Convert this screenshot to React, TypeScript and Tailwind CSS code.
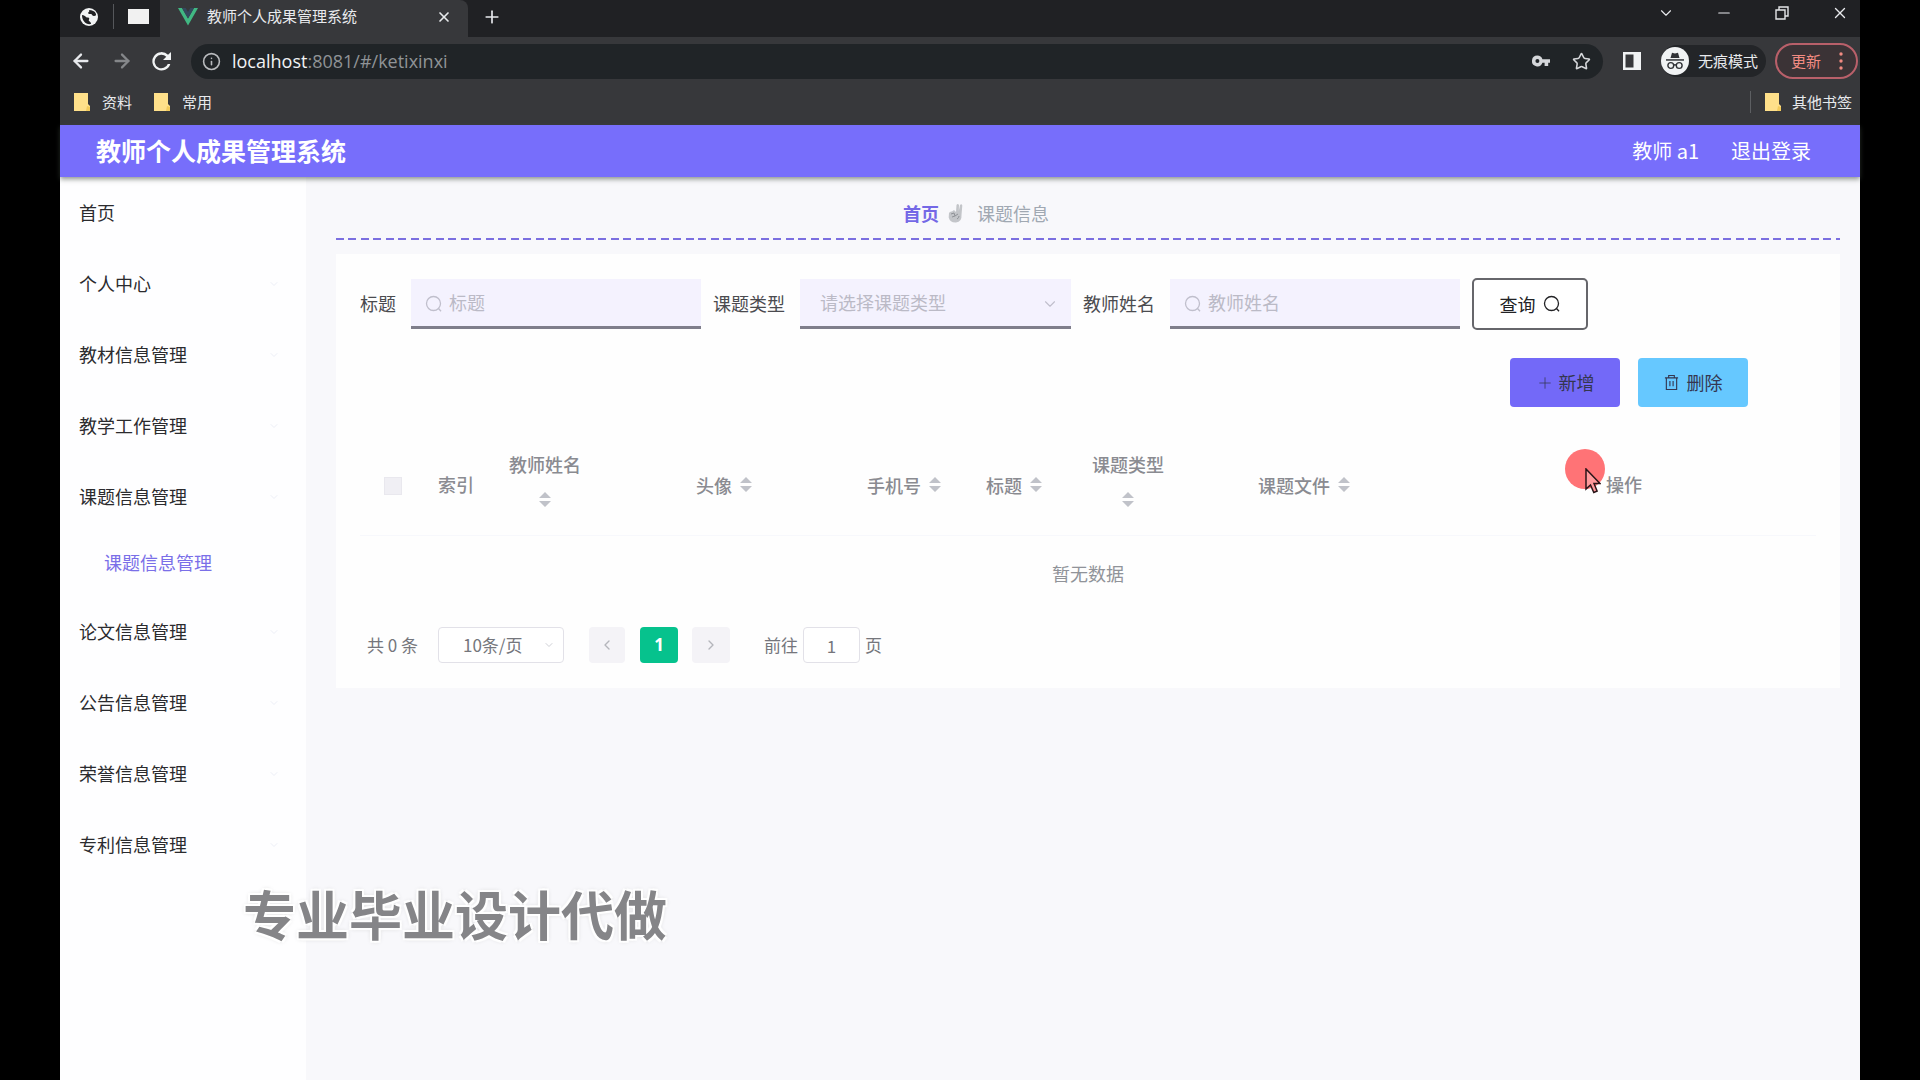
import React from 'react';
import { ChevronDown, ChevronLeft, ChevronRight, Info, Minus, Plus, Star, X, ArrowLeft, ArrowRight } from 'lucide-react';

const menuBefore = ['个人中心', '教材信息管理', '教学工作管理', '课题信息管理'];
const menuAfter = ['论文信息管理', '公告信息管理', '荣誉信息管理', '专利信息管理'];

function GlobeIcon() {
  return (
    <svg viewBox="0 0 20 20" className="size-5" aria-hidden="true">
      <circle cx="10" cy="10" r="9" fill="#f1f3f4" />
      <path d="M3 8c2 0 3 1 4 2s2 0 3 1-1 2 0 3 2 1 2 3c-5 1-9-3-9-9Z" fill="#202124" />
      <path d="M10 3c1 2-1 2-1 3s2 1 3 1 1 2 3 2 2-1 2-2c-1-3-4-4-7-4Z" fill="#202124" />
    </svg>
  );
}

function VueIcon() {
  return (
    <svg viewBox="0 0 20 18" className="h-[18px] w-5" aria-hidden="true">
      <path d="M0 0h4l6 10.500L16 0h4L10 17.500Z" fill="#41b883" />
      <path d="M4 0h3.700L10 4l2.300-4H16L10 10.500Z" fill="#35495e" />
    </svg>
  );
}

function ReloadIcon() {
  return (
    <svg viewBox="0 0 16 16" className="size-[19px]" aria-hidden="true">
      <path d="M13.500 2.400A7.700 7.700 0 1 0 15.400 10h-2.100a5.700 5.700 0 1 1-1.300-6L9.300 6.700H16V0Z" fill="#f1f3f4" />
    </svg>
  );
}

function KeyIcon() {
  return (
    <svg viewBox="0 0 20 12" className="h-3 w-[18px]" aria-hidden="true">
      <path d="M6 0a6 6 0 1 0 5.600 8H14v3.500h4V8h2V4h-8.400A6 6 0 0 0 6 0Zm0 8.200a2.200 2.200 0 1 1 0-4.400 2.200 2.200 0 0 1 0 4.400Z" fill="#d5d7da" fillRule="evenodd" />
    </svg>
  );
}

function IncognitoIcon() {
  return (
    <svg viewBox="0 0 28 28" className="size-7" aria-hidden="true">
      <circle cx="14" cy="14" r="14" fill="#f1f3f4" />
      <path d="M9.500 11 11 5.800l3 .8 3-.8 1.500 5.200Z" fill="#303236" />
      <path d="M5 12.200h18v1.500H5Z" fill="#303236" />
      <g fill="none" stroke="#303236" strokeWidth="1.400">
        <circle cx="9.800" cy="18.500" r="2.900" />
        <circle cx="18.200" cy="18.500" r="2.900" />
        <path d="M12.700 18.200q1.300-.9 2.600 0" />
      </g>
    </svg>
  );
}

function FolderIcon() {
  return (
    <svg viewBox="0 0 16 18" className="h-[18px] w-4" aria-hidden="true">
      <path d="M0 0h14v11l2 2v5H0Z" fill="#ffe08a" />
      <path d="M13 13l3 1v4h-4Z" fill="#f3cb5c" />
    </svg>
  );
}

function PanelIcon() {
  return (
    <svg viewBox="0 0 18 18" className="size-[18px]" aria-hidden="true">
      <path d="M0 0h18v18H0Zm2.500 2.500v13h8v-13Z" fill="#f1f3f4" fillRule="evenodd" />
    </svg>
  );
}

function RestoreIcon() {
  return (
    <svg viewBox="0 0 14 14" className="size-[14px]" fill="none" stroke="#e4e6e8" strokeWidth="1.400" aria-hidden="true">
      <path d="M1 4h9v9H1ZM4 4V1h9v9h-3" />
    </svg>
  );
}

function SearchIcon({ className }: { className: string }) {
  return (
    <svg viewBox="0 0 18 18" className={className} fill="none" stroke="currentColor" strokeWidth="1.300" aria-hidden="true">
      <circle cx="8.500" cy="8.500" r="7" />
      <path d="m13.500 13.500 2.500 2.700" />
    </svg>
  );
}

function TrashIcon() {
  return (
    <svg viewBox="0 0 16 18" className="h-[17px] w-[15px]" fill="none" stroke="currentColor" strokeWidth="1.200" aria-hidden="true">
      <path d="M1 4h14M5 4V1.500h6V4M2.500 4v12.500h11V4M6.300 7.500v5.500M9.700 7.500v5.500" />
    </svg>
  );
}

function HandIcon() {
  return (
    <svg viewBox="0 0 16 20" className="h-5 w-4" aria-hidden="true">
      <path d="M8 9 8.500 2q1.200-2 2.500 0L10.800 8l1.200-6q1.500-1.500 2.300.5L13.500 12q.5 7-5.500 7.500-6 .3-7.300-5L1 10q1-2 3-1.500l2-1.500Z" fill="#c3c5c9" />
      <path d="M3 11l3-1 1 3-3 1m3-1 3-2m-1 5q2-1 2-3" fill="none" stroke="#8f9297" strokeWidth="1" />
    </svg>
  );
}

function SortButton({ label }: { label: string }) {
  return (
    <button type="button" aria-label={'按' + label + '排序'} className="flex h-7 w-4 items-center justify-center">
      <svg viewBox="0 0 12 15" className="h-[15px] w-3" aria-hidden="true">
        <path d="M6 0l6 6H0ZM0 9h12l-6 6Z" fill="#c0c2c9" />
      </svg>
    </button>
  );
}

function SortHeader({ label }: { label: string }) {
  return (
    <th scope="col" className="font-medium">
      <div className="flex items-center justify-center gap-1.5">
        <span className="leading-8">{label}</span>
        <SortButton label={label} />
      </div>
    </th>
  );
}

function StackedSortHeader({ label }: { label: string }) {
  return (
    <th scope="col" className="pb-2 font-medium">
      <div className="flex flex-col items-center gap-1.5">
        <span className="leading-8">{label}</span>
        <SortButton label={label} />
      </div>
    </th>
  );
}

function SearchField({ id, label }: { id: string; label: string }) {
  return (
    <div className="flex items-center gap-[15px]">
      <label htmlFor={id} className="pb-0.5">{label}</label>
      <div className="relative w-[290px]">
        <SearchIcon className="absolute top-4 left-[14px] size-[18px] text-[#c0bfcc]" />
        <input
          id={id}
          type="text"
          placeholder={label}
          className="h-[50px] w-full border-b-3 border-[#7f7e8b] bg-[#f4f2fe] pr-3 pb-0.5 pl-[38px] outline-none placeholder:text-[#bbbac6]"
        />
      </div>
    </div>
  );
}

function BrowserChrome() {
  return (
    <div className="bg-[#37383b] text-[15px] text-[#e8eaed]">
      <div className="flex h-[37px] items-stretch justify-between bg-[#202124] pb-1">
        <div className="flex items-stretch">
          <div className="flex w-[53px] items-center justify-center pl-1">
            <GlobeIcon />
          </div>
          <div className="my-1 w-px bg-[#55575b]" />
          <div className="flex w-[46px] items-center pl-[14px]">
            <div className="h-[15px] w-[21px] bg-[#f1f1f1]" />
          </div>
          <div className="-mb-1 flex w-[308px] items-center justify-between rounded-tr-lg bg-[#37383b] pr-4 pb-1 pl-[18px]">
            <div className="flex items-center gap-[9px]">
              <VueIcon />
              <span>教师个人成果管理系统</span>
            </div>
            <button type="button" aria-label="关闭标签页">
              <X className="size-4" strokeWidth={2.5} />
            </button>
          </div>
          <button type="button" aria-label="新标签页" className="px-[14px]">
            <Plus className="size-5" strokeWidth={2} />
          </button>
        </div>
        <div className="mr-[11px] flex items-center gap-10 pb-2">
          <button type="button" aria-label="搜索标签页"><ChevronDown className="size-[18px]" strokeWidth={1.5} /></button>
          <button type="button" aria-label="最小化"><Minus className="size-[18px]" strokeWidth={1.5} /></button>
          <button type="button" aria-label="还原" className="px-0.5"><RestoreIcon /></button>
          <button type="button" aria-label="关闭"><X className="size-[18px]" strokeWidth={1.8} /></button>
        </div>
      </div>
      <div className="flex h-12 items-center">
        <div className="flex items-center gap-[19px] pr-5 pl-[10px]">
          <button type="button" aria-label="后退"><ArrowLeft className="size-[22px]" strokeWidth={2.5} /></button>
          <button type="button" aria-label="前进" className="text-[#85878a]"><ArrowRight className="size-[22px]" strokeWidth={2.5} /></button>
          <button type="button" aria-label="重新加载"><ReloadIcon /></button>
        </div>
        <div className="flex h-[35px] flex-1 items-center rounded-full bg-[#202427] pr-3 pl-[11px]">
          <Info className="size-[19px] text-[#b9bbbe]" strokeWidth={2} />
          <span className="ml-[11px] flex-1 font-['Open_Sans','Noto_Sans_CJK_SC',sans-serif] text-[18px] leading-6 text-[#8f9396]">
            <span className="text-[#f1f3f4]">localhost</span>:8081/#/ketixinxi
          </span>
          <KeyIcon />
          <Star className="ml-[22px] size-[19px] text-[#d5d7da]" />
        </div>
        <button type="button" aria-label="侧边栏" className="mx-5"><PanelIcon /></button>
        <button type="button" className="flex h-8 items-center gap-[9px] rounded-full bg-[#232528] pr-2">
          <IncognitoIcon />
          无痕模式
        </button>
        <button type="button" className="mr-0.5 ml-[9px] flex h-9 items-center gap-[18px] rounded-full border-2 border-[#b9606a] bg-[#3b3336] pr-[13px] pl-[14px] text-[#f28b82]">
          更新
          <svg viewBox="0 0 4 18" className="h-[18px] w-1" fill="currentColor" aria-hidden="true">
            <circle cx="2" cy="2" r="1.700" /><circle cx="2" cy="9" r="1.700" /><circle cx="2" cy="16" r="1.700" />
          </svg>
        </button>
      </div>
      <div className="flex h-10 items-center pr-2 pb-1.5 pl-[14px]">
        <a href="#ziliao" className="flex items-center gap-3"><FolderIcon />资料</a>
        <a href="#changyong" className="ml-[22px] flex items-center gap-3"><FolderIcon />常用</a>
        <div className="mr-[14px] ml-auto h-[22px] w-px bg-[#5d5f62]" />
        <a href="#qita" className="flex items-center gap-[11px]"><FolderIcon />其他书签</a>
      </div>
    </div>
  );
}

function MenuItem({ label, arrow }: { label: string; arrow?: boolean }) {
  return (
    <li>
      <a href="#menu" className="flex h-[71px] items-center justify-between pr-[26px] pl-[19px]">
        {label}
        {arrow && <ChevronDown className="size-3 text-[#edeff7]" strokeWidth={2} />}
      </a>
    </li>
  );
}

function Sidebar() {
  return (
    <nav className="w-[246px] shrink-0 bg-[#fefeff] text-[#2b2b2e]">
      <ul>
        <MenuItem label="首页" />
        {menuBefore.map((label) => <MenuItem key={label} label={label} arrow />)}
        <li>
          <a href="#/ketixinxi" className="flex h-16 items-center pb-1 pl-11 text-[#7a6fe8]">课题信息管理</a>
        </li>
        {menuAfter.map((label) => <MenuItem key={label} label={label} arrow />)}
      </ul>
    </nav>
  );
}

function DataTable() {
  return (
    <table className="mt-7 w-full table-fixed text-center text-[#8a8b91]">
      <colgroup>
        <col className="w-[66px]" />
        <col className="w-[60px]" />
        <col className="w-[118px]" />
        <col className="w-[242px]" />
        <col className="w-[118px]" />
        <col className="w-[102px]" />
        <col className="w-[124px]" />
        <col className="w-[230px]" />
        <col />
      </colgroup>
      <thead>
        <tr className="h-[100px] border-b border-[#f7f8fc]">
          <th scope="col" className="pt-0.5">
            <input type="checkbox" aria-label="全选" className="mx-auto block size-[18px] appearance-none border border-[#e9e8ee] bg-[#f0eff4]" />
          </th>
          <th scope="col" className="font-medium">索引</th>
          <StackedSortHeader label="教师姓名" />
          <SortHeader label="头像" />
          <SortHeader label="手机号" />
          <SortHeader label="标题" />
          <StackedSortHeader label="课题类型" />
          <SortHeader label="课题文件" />
          <th scope="col" className="pl-3 font-medium">操作</th>
        </tr>
      </thead>
      <tbody>
        <tr className="h-[78px]">
          <td colSpan={9} className="pb-0.5 text-[#909399]">暂无数据</td>
        </tr>
      </tbody>
    </table>
  );
}

function Pagination() {
  return (
    <div className="mt-[14px] flex h-9 items-center text-[17px] text-[#75767c]">
      <span className="ml-[7px] w-[71px]">共 0 条</span>
      <div className="relative">
        <select aria-label="每页条数" className="h-9 w-[126px] appearance-none rounded border border-[#e2e1e8] bg-white pl-6 outline-none">
          <option>10条/页</option>
        </select>
        <ChevronDown className="pointer-events-none absolute top-3 right-[9px] size-3 text-[#cfd0d6]" />
      </div>
      <button type="button" aria-label="上一页" className="ml-[25px] flex size-9 items-center justify-center rounded-sm bg-[#f4f3f7] text-[#b4b5bb]">
        <ChevronLeft className="size-4" />
      </button>
      <button type="button" aria-current="page" className="ml-[15px] h-9 w-[38px] rounded-sm bg-[#06c28d] font-['Open_Sans',sans-serif] font-bold text-white">1</button>
      <button type="button" aria-label="下一页" className="ml-[14px] flex h-9 w-[38px] items-center justify-center rounded-sm bg-[#f4f3f7] text-[#b4b5bb]">
        <ChevronRight className="size-4" />
      </button>
      <label htmlFor="page" className="ml-[34px]">前往</label>
      <input id="page" type="text" defaultValue="1" className="mx-[5px] h-9 w-[57px] rounded border border-[#e2e1e8] bg-white text-center outline-none" />
      <span>页</span>
    </div>
  );
}

function Content() {
  return (
    <main className="min-w-0 flex-1 bg-[#f8f8fb] pr-5 pl-[30px]">
      <div className="flex h-[62px] items-center justify-center pt-[10px] pr-56">
        <a href="#/index" className="font-bold text-[#7468e6]">首页</a>
        <span className="mr-[13px] ml-[9px]"><HandIcon /></span>
        <span className="text-[#a0a8b2]">课题信息</span>
      </div>
      <div className="-mt-px h-0.5 bg-[repeating-linear-gradient(90deg,#7b6fe0_0px_8px,transparent_8px_12px,#7b6fe0_12px_20px,transparent_20px_25px)]" />
      <section className="mt-[14px] bg-[#fefefe] px-6 pt-6 pb-[25px]">
        <form className="flex items-center gap-3 text-[#4b4b4f]" onSubmit={(e) => e.preventDefault()}>
          <SearchField id="title" label="标题" />
          <div className="flex items-center gap-[15px]">
            <label htmlFor="type" className="pb-0.5">课题类型</label>
            <div className="relative w-[271px]">
              <select id="type" className="h-[50px] w-full appearance-none border-b-3 border-[#7f7e8b] bg-[#f4f2fe] pl-5 text-[#bbbac6] outline-none">
                <option>请选择课题类型</option>
              </select>
              <ChevronDown className="pointer-events-none absolute top-4 right-3 size-[18px] text-[#c0bfcc]" strokeWidth={1.5} />
            </div>
          </div>
          <SearchField id="teacher" label="教师姓名" />
          <button type="submit" className="flex h-[52px] w-[116px] items-center justify-center gap-[7px] rounded-[5px] border-2 border-[#66666b] bg-white text-[#222225]">
            查询
            <SearchIcon className="size-[18px]" />
          </button>
        </form>
        <div className="mt-7 flex justify-end gap-[18px] pr-[68px] text-[#343650]">
          <button type="button" className="flex h-[49px] w-[110px] items-center justify-center gap-[5px] rounded bg-[#7369f8]">
            <Plus className="size-[18px]" strokeWidth={1} />
            新增
          </button>
          <button type="button" className="flex h-[49px] w-[110px] items-center justify-center gap-2 rounded bg-[#66c8ff]">
            <TrashIcon />
            删除
          </button>
        </div>
        <DataTable />
        <Pagination />
      </section>
    </main>
  );
}

export default function App() {
  return (
    <div className="flex min-h-screen bg-black px-[60px] font-['Noto_Sans_CJK_SC',sans-serif]">
      <div className="relative flex min-w-0 flex-1 flex-col text-[18px]">
        <BrowserChrome />
        <header className="relative flex h-[52px] items-center justify-between bg-[#776efb] pr-[49px] pl-9 text-white shadow-[0_2px_5px_rgba(60,70,60,0.6)]">
          <h1 className="text-[25px] font-bold">教师个人成果管理系统</h1>
          <div className="flex items-center gap-8 text-[20px]">
            <span>教师 a1</span>
            <a href="#/login">退出登录</a>
          </div>
        </header>
        <div className="flex flex-1">
          <Sidebar />
          <Content />
        </div>
        <div className="pointer-events-none absolute top-[875px] left-[183px] text-[53px] leading-[76px] font-bold text-[#858588] [text-shadow:0_0_1px_#fff,2px_2px_1px_#fff,-2px_-2px_1px_#fff,2px_-2px_1px_#fff,-2px_2px_1px_#fff,0_0_5px_#bbb]">
          专业毕业设计代做
        </div>
        <div className="pointer-events-none absolute top-[449px] left-[1505px] size-10 rounded-full bg-[#ff7376]">
          <svg viewBox="0 0 16 26" className="absolute top-[19px] left-5 h-[26px] w-4" aria-hidden="true">
            <path d="M1 1v20l4.500-4 3.300 7.500 3.300-1.500L9 15.500h6Z" fill="#ff9a9c" stroke="#2a1518" strokeWidth="1.500" />
          </svg>
        </div>
      </div>
    </div>
  );
}
